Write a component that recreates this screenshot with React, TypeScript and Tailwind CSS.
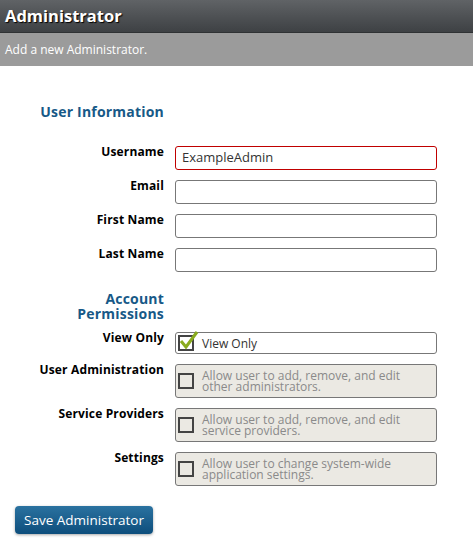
import React from "react";

const font = { fontFamily: '"Open Sans", "Noto Sans", sans-serif' };

function Check({ checked }: { checked?: boolean }) {
  return (
    <span className="relative inline-block w-[16px] h-[16px] border-2 border-[#444] shrink-0">
      {checked && (
        <svg className="absolute left-[-1px] top-[-7px]" width="20" height="20" viewBox="0 0 20 20">
          <path d="M2 11 L7 17 L18 2" fill="none" stroke="#8aab1e" strokeWidth="3" strokeLinejoin="miter" />
        </svg>
      )}
    </span>
  );
}

function TextRow({ label, value, error }: { label: string; value?: string; error?: boolean }) {
  return (
    <div className="flex items-start">
      <div className="w-[164px] text-right text-[12px] font-bold text-black leading-[14px] mt-[-1px] tracking-[0.15px]">{label}</div>
      <div
        className={
          "ml-[11px] w-[262px] h-[24px] rounded-[3px] border bg-white px-[6px] flex items-center text-[13px] text-[#333] " +
          (error ? "border-[#c00000]" : "border-[#777]")
        }
      >
        {value}
      </div>
    </div>
  );
}

function PermRow({ label, text, checked, disabled }: { label: string; text: string; checked?: boolean; disabled?: boolean }) {
  return (
    <div className="flex items-start">
      <div className="w-[164px] text-right text-[12px] font-bold text-black leading-[14px] mt-[-1px] tracking-[0.15px]">{label}</div>
      <div
        className={
          "ml-[11px] w-[262px] rounded-[3px] border border-[#777] flex items-center pl-[2px] pr-[6px] " +
          (disabled ? "bg-[#ebe9e3] h-[34px]" : "bg-white h-[22px]")
        }
      >
        <Check checked={checked} />
        <div className={"ml-[8px] text-[12px] leading-[11px] " + (disabled ? "text-[#8a8a8a]" : "text-[#333]")}>{text}</div>
      </div>
    </div>
  );
}

export default function App() {
  return (
    <div className="w-[473px] h-[555px] bg-white" style={font}>
      <div className="h-[33px] bg-gradient-to-b from-[#606366] to-[#3e4144] flex items-center px-[5px] border-b border-[#2f3234]">
        <span className="text-white font-bold text-[16.5px]" style={{ textShadow: "1px 1px 1px #000" }}>Administrator</span>
      </div>
      <div className="h-[33px] bg-[#9b9b9b] flex items-center px-[5px]">
        <span className="text-white text-[12px]">Add a new Administrator.</span>
      </div>
      <div className="pt-[38px]">
        <div className="w-[164px] text-right text-[14px] font-bold text-[#175987] leading-[16px] tracking-[0.2px]">User Information</div>
        <div className="mt-[26px] flex flex-col gap-[10px]">
          <TextRow label="Username" value="ExampleAdmin" error />
          <TextRow label="Email" />
          <TextRow label="First Name" />
          <TextRow label="Last Name" />
        </div>
        <div className="mt-[19px] w-[164px] text-right text-[14px] font-bold text-[#175987] leading-[15px] tracking-[0.2px]">
          Account
          <br />
          Permissions
        </div>
        <div className="mt-[11px] flex flex-col gap-[10px]">
          <PermRow label="View Only" text="View Only" checked />
          <PermRow label="User Administration" text={"Allow user to add, remove, and edit other administrators."} disabled />
          <PermRow label="Service Providers" text="Allow user to add, remove, and edit service providers." disabled />
          <PermRow label="Settings" text="Allow user to change system-wide application settings." disabled />
        </div>
        <div className="pl-[15px] mt-[20px]">
          <button className="w-[138px] h-[28px] rounded-[4px] bg-gradient-to-b from-[#2a72a0] to-[#0d4e7c] text-white text-[13.5px] shadow-[0_1px_3px_rgba(0,0,0,0.35)]">
            Save Administrator
          </button>
        </div>
      </div>
    </div>
  );
}
